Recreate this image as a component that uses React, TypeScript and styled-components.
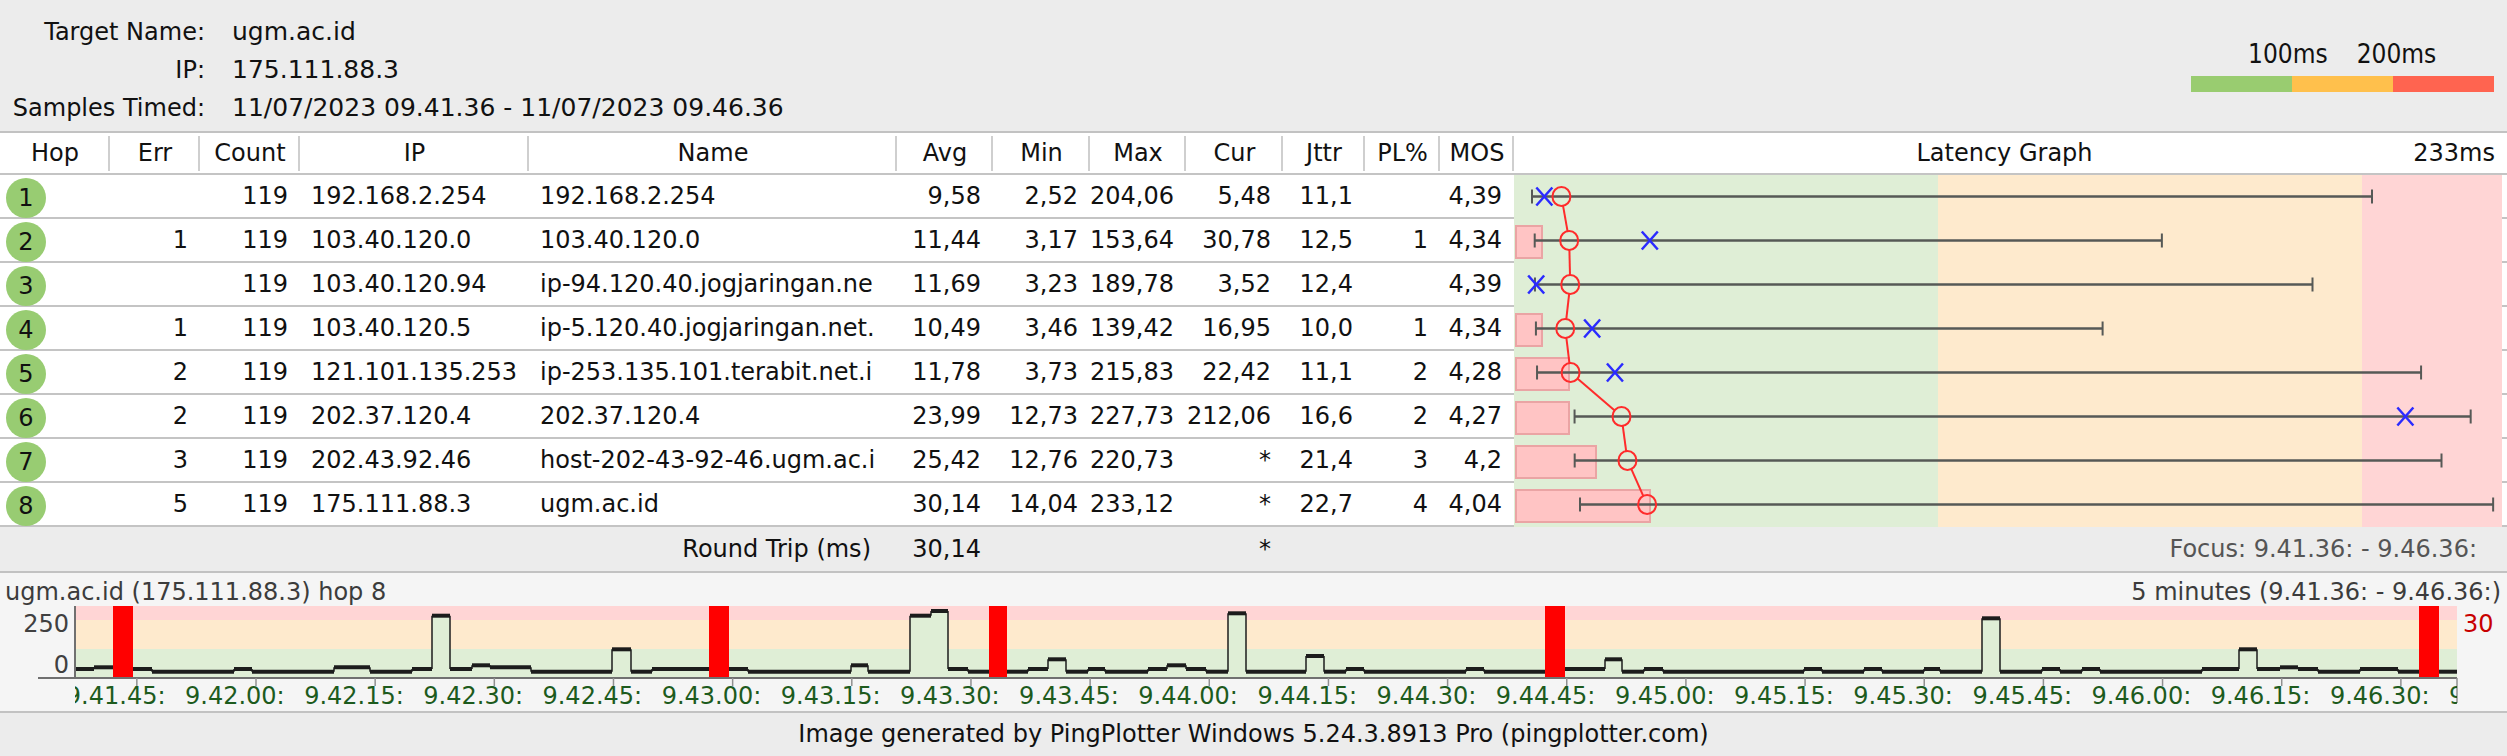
import React from "react";
import styled, { createGlobalStyle } from "styled-components";

const GlobalStyle = createGlobalStyle`
  html, body {
    margin: 0;
    padding: 0;
  }
  body {
    background: #ececec;
    font-family: "DejaVu Sans", Verdana, sans-serif;
    font-size: 24px;
    color: #111;
  }
`;

const COLUMNS =
  "110px 90px 100px 229px 368px 96px 97px 96px 97px 82px 75px 74px 993px";

const BAND = {
  green: "#dfeed6",
  orange: "#feeacd",
  pink: "#ffd5d5",
};

const hops = [
  { hop: 1, err: "", count: "119", ip: "192.168.2.254", name: "192.168.2.254", avg: "9,58", min: "2,52", max: "204,06", cur: "5,48", jttr: "11,1", pl: "", mos: "4,39" },
  { hop: 2, err: "1", count: "119", ip: "103.40.120.0", name: "103.40.120.0", avg: "11,44", min: "3,17", max: "153,64", cur: "30,78", jttr: "12,5", pl: "1", mos: "4,34" },
  { hop: 3, err: "", count: "119", ip: "103.40.120.94", name: "ip-94.120.40.jogjaringan.ne", avg: "11,69", min: "3,23", max: "189,78", cur: "3,52", jttr: "12,4", pl: "", mos: "4,39" },
  { hop: 4, err: "1", count: "119", ip: "103.40.120.5", name: "ip-5.120.40.jogjaringan.net.", avg: "10,49", min: "3,46", max: "139,42", cur: "16,95", jttr: "10,0", pl: "1", mos: "4,34" },
  { hop: 5, err: "2", count: "119", ip: "121.101.135.253", name: "ip-253.135.101.terabit.net.i", avg: "11,78", min: "3,73", max: "215,83", cur: "22,42", jttr: "11,1", pl: "2", mos: "4,28" },
  { hop: 6, err: "2", count: "119", ip: "202.37.120.4", name: "202.37.120.4", avg: "23,99", min: "12,73", max: "227,73", cur: "212,06", jttr: "16,6", pl: "2", mos: "4,27" },
  { hop: 7, err: "3", count: "119", ip: "202.43.92.46", name: "host-202-43-92-46.ugm.ac.i", avg: "25,42", min: "12,76", max: "220,73", cur: "*", jttr: "21,4", pl: "3", mos: "4,2" },
  { hop: 8, err: "5", count: "119", ip: "175.111.88.3", name: "ugm.ac.id", avg: "30,14", min: "14,04", max: "233,12", cur: "*", jttr: "22,7", pl: "4", mos: "4,04" },
];

const headers = ["Hop", "Err", "Count", "IP", "Name", "Avg", "Min", "Max", "Cur", "Jttr", "PL%", "MOS"];

const Page = styled.div`
  width: 2507px;
  height: 756px;
  display: flex;
  flex-direction: column;
  overflow: hidden;
`;

const InfoBar = styled.header`
  height: 133px;
  box-sizing: border-box;
  border-bottom: 2px solid #c2c2c2;
  display: flex;
  justify-content: space-between;
  align-items: flex-start;
`;

const InfoGrid = styled.div`
  display: grid;
  grid-template-columns: 205px auto;
  column-gap: 27px;
  padding-top: 13px;
  line-height: 37px;
  white-space: nowrap;
  align-items: baseline;
`;

const InfoLabel = styled.span`
  text-align: right;
`;

const InfoValue = styled.span`
  font-size: 25px;
`;

const Legend = styled.div`
  padding: 39px 13px 0 0;
  display: flex;
  flex-direction: column;
  font-family: "DejaVu Sans Condensed", "DejaVu Sans", sans-serif;
  font-size: 26px;
  color: #111;
`;

const LegendLabels = styled.div`
  display: flex;
  gap: 29px;
  padding-left: 57px;
  line-height: 30px;
`;

const LegendBar = styled.div`
  display: flex;
  margin-top: 7px;
`;

const LegendSwatch = styled.div<{ $color: string }>`
  width: 101px;
  height: 16px;
  background: ${(p) => p.$color};
`;

const Table = styled.div`
  display: grid;
  grid-template-columns: ${COLUMNS};
  grid-template-rows: 42px repeat(8, 44px);
  background: #fff;
`;

const HeadCell = styled.div<{ $sep?: boolean }>`
  height: 42px;
  box-sizing: border-box;
  border-bottom: 2px solid #c4c4c4;
  display: flex;
  align-items: center;
  justify-content: center;
  white-space: nowrap;
  background: ${(p) =>
    p.$sep ? "linear-gradient(#cfcfcf, #cfcfcf) no-repeat right 0 top 3px / 2px 35px" : "none"};
`;

const GraphHead = styled(HeadCell)`
  display: grid;
  grid-template-columns: 1fr auto 1fr;
  padding-right: 12px;
`;

const GraphMax = styled.span`
  justify-self: end;
`;

const Cell = styled.div<{ $align?: "left" | "right" }>`
  height: 44px;
  box-sizing: border-box;
  border-bottom: 2px solid #c4c4c4;
  display: flex;
  align-items: center;
  justify-content: ${(p) => (p.$align === "left" ? "flex-start" : "flex-end")};
  padding: ${(p) => (p.$align === "left" ? "0 0 0 11px" : "0 12px 0 0")};
  white-space: nowrap;
  overflow: hidden;
`;

const HopCell = styled.div`
  height: 44px;
  box-sizing: border-box;
  border-bottom: 2px solid #c4c4c4;
  display: flex;
  align-items: flex-start;
  padding-left: 6px;
`;

const HopBadge = styled.div`
  width: 40px;
  height: 40px;
  margin-top: 3px;
  border-radius: 50%;
  background: #98cc72;
  display: flex;
  align-items: center;
  justify-content: center;
  position: relative;
`;

const GraphCell = styled.div`
  grid-column: 13;
  grid-row: 2 / span 8;
`;

const GraphSvg = styled.svg`
  display: block;
`;

const SummaryRow = styled.div`
  display: grid;
  grid-template-columns: ${COLUMNS};
  height: 46px;
  box-sizing: border-box;
  border-bottom: 2px solid #c2c2c2;
  align-items: center;
  white-space: nowrap;
`;

const SummaryCell = styled.span<{ $col: string; $pad?: number; $muted?: boolean }>`
  grid-column: ${(p) => p.$col};
  justify-self: end;
  padding-right: ${(p) => p.$pad ?? 12}px;
  color: ${(p) => (p.$muted ? "#555" : "#111")};
`;

const TrendPanel = styled.section`
  height: 140px;
  box-sizing: border-box;
  border-bottom: 2px solid #c2c2c2;
  background: #f5f5f5;
  display: flex;
  flex-direction: column;
`;

const TrendHeader = styled.div`
  height: 33px;
  box-sizing: border-box;
  padding: 5px 6px 0 5px;
  display: flex;
  justify-content: space-between;
  line-height: 28px;
  color: #3c3c3c;
  white-space: nowrap;
`;

const TrendSvg = styled.svg`
  display: block;
  font-family: "DejaVu Sans", Verdana, sans-serif;
  font-size: 24px;
`;

const Footer = styled.footer`
  height: 43px;
  line-height: 43px;
  text-align: center;
  color: #111;
  white-space: nowrap;
`;

const num = (v: string) => parseFloat(v.replace(",", "."));
const msToX = (ms: number) => 7.5 + 4.168 * ms;
const ROW_H = 44;

function LatencyGraph() {
  const centers = hops.map((h, i) => ({ x: msToX(num(h.avg)), y: i * ROW_H + 21.5 }));
  const r = 9;
  return (
    <GraphSvg width={993} height={ROW_H * 8}>
      <rect x={0} y={0} width={424} height={352} fill={BAND.green} />
      <rect x={424} y={0} width={424} height={352} fill={BAND.orange} />
      <rect x={848} y={0} width={140} height={352} fill={BAND.pink} />
      <rect x={988} y={0} width={5} height={352} fill="#fff" />
      {hops.map((_, i) => (
        <rect key={`sep${i}`} x={988} y={i * ROW_H + 42} width={5} height={2} fill="#c4c4c4" />
      ))}
      {hops.map((h, i) => {
        const cy = i * ROW_H + 21.5;
        const x1 = msToX(num(h.min));
        const x2 = msToX(num(h.max));
        const err = h.err ? parseInt(h.err, 10) : 0;
        return (
          <g key={h.hop}>
            {err > 0 && (
              <rect
                x={2}
                y={i * ROW_H + 7}
                width={27 * err - 1}
                height={32}
                fill="#ffc4c4"
                stroke="#eaa4a4"
                strokeWidth={2}
              />
            )}
            <line x1={x1} x2={x2} y1={cy} y2={cy} stroke="#565956" strokeWidth={2.5} />
            <line x1={x1} x2={x1} y1={cy - 7} y2={cy + 7} stroke="#565956" strokeWidth={2} />
            <line x1={x2} x2={x2} y1={cy - 7} y2={cy + 7} stroke="#565956" strokeWidth={2} />
          </g>
        );
      })}
      {centers.slice(0, -1).map((a, i) => {
        const b = centers[i + 1];
        const dx = b.x - a.x;
        const dy = b.y - a.y;
        const len = Math.hypot(dx, dy);
        return (
          <line
            key={`link${i}`}
            x1={a.x + (dx / len) * r}
            y1={a.y + (dy / len) * r}
            x2={b.x - (dx / len) * r}
            y2={b.y - (dy / len) * r}
            stroke="#ff2b2b"
            strokeWidth={2}
          />
        );
      })}
      {hops.map((h, i) => {
        if (h.cur === "*") return null;
        const x = msToX(num(h.cur));
        const y = i * ROW_H + 21.5;
        return (
          <path
            key={`cur${i}`}
            d={`M${x - 8} ${y - 9} L${x + 8} ${y + 9} M${x + 8} ${y - 9} L${x - 8} ${y + 9}`}
            stroke="#2b2bff"
            strokeWidth={2.5}
            fill="none"
          />
        );
      })}
      {centers.map((c, i) => (
        <ellipse key={`avg${i}`} cx={c.x} cy={c.y} rx={9} ry={9.5} fill="none" stroke="#ff2b2b" strokeWidth={2} />
      ))}
    </GraphSvg>
  );
}

// step data of the hop 8 trace, in page x and chart-relative y
const B = 65.7;
const b = 63;
const c = 61.3;
const d = 59.3;
const runs: [number, number, number][][] = [
  [[75, 94, b], [94, 113, c]],
  [
    [133, 152, b], [152, 234, B], [234, 252, b], [252, 334, B], [334, 370, c], [370, 412, B],
    [412, 432, b], [432, 450, 9.7], [450, 472, b], [472, 490, d], [490, 531, c], [531, 612, B],
    [612, 631, 43.3], [631, 652, B], [652, 709, b],
  ],
  [
    [729, 748, b], [748, 851, B], [851, 868, d], [868, 910, B], [910, 931, 9.7], [931, 948, 5],
    [948, 968, b], [968, 989, B],
  ],
  [
    [1007, 1028, B], [1028, 1048, b], [1048, 1066, 53.3], [1066, 1088, B], [1088, 1105, b],
    [1105, 1148, B], [1148, 1167, b], [1167, 1186, d], [1186, 1206, b], [1206, 1228, B],
    [1228, 1246, 7.3], [1246, 1306, B], [1306, 1324, 50], [1324, 1346, B], [1346, 1364, b],
    [1364, 1466, B], [1466, 1484, b], [1484, 1545, B],
  ],
  [
    [1565, 1605, b], [1605, 1622, 53.3], [1622, 1644, B], [1644, 1663, b], [1663, 1804, B],
    [1804, 1822, b], [1822, 1864, B], [1864, 1882, b], [1882, 1924, B], [1924, 1940, b],
    [1940, 1982, B], [1982, 2000, 12.3], [2000, 2042, B], [2042, 2060, b], [2060, 2082, B],
    [2082, 2100, b], [2100, 2202, B], [2202, 2239, b], [2239, 2257, 43.3], [2257, 2280, b],
    [2280, 2298, c], [2298, 2318, b], [2318, 2360, B], [2360, 2398, b], [2398, 2419, B],
  ],
  [[2439, 2457, B]],
];

const lossBars = [
  [113, 20],
  [709, 20],
  [989, 18],
  [1545, 20],
  [2419, 20],
];

const PLOT_L = 75;
const PLOT_R = 2457;
const AXIS_Y = 72;

const tickX = (t: number) => 256 + (t - 24) * 7.944;
const timeLabel = (t: number) => {
  const total = 41 * 60 + 36 + t;
  const mm = Math.floor(total / 60);
  const ss = total % 60;
  return `9.${String(mm).padStart(2, "0")}.${String(ss).padStart(2, "0")}:`;
};

function TrendChart() {
  const ticks: number[] = [];
  for (let t = 9; t <= 309; t += 15) ticks.push(t);
  return (
    <TrendSvg width={2507} height={105}>
      <defs>
        <clipPath id="plotClip">
          <rect x={PLOT_L} y={0} width={PLOT_R - PLOT_L} height={105} />
        </clipPath>
      </defs>
      <rect x={PLOT_L} y={0} width={PLOT_R - PLOT_L} height={14} fill={BAND.pink} />
      <rect x={PLOT_L} y={14} width={PLOT_R - PLOT_L} height={29} fill={BAND.orange} />
      <rect x={PLOT_L} y={43} width={PLOT_R - PLOT_L} height={29} fill={BAND.green} />
      {runs.map((run, ri) => {
        const pts = [`${run[0][0]},${AXIS_Y}`];
        run.forEach(([x1, x2, y]) => pts.push(`${x1},${y}`, `${x2},${y}`));
        pts.push(`${run[run.length - 1][1]},${AXIS_Y}`);
        return (
          <g key={`run${ri}`}>
            <polygon points={pts.join(" ")} fill={BAND.green} />
            {run.slice(0, -1).map(([, x2, y], si) => (
              <line key={`v${si}`} x1={x2} x2={x2} y1={y} y2={run[si + 1][2]} stroke="#1c1c1c" strokeWidth={1.5} />
            ))}
            {run.map(([x1, x2, y], si) => (
              <line key={`h${si}`} x1={x1} x2={x2} y1={y} y2={y} stroke="#1c1c1c" strokeWidth={4} />
            ))}
          </g>
        );
      })}
      {lossBars.map(([x, w]) => (
        <rect key={`loss${x}`} x={x} y={0} width={w} height={AXIS_Y} fill="#ff0000" />
      ))}
      <line x1={PLOT_L} x2={PLOT_L} y1={0} y2={AXIS_Y} stroke="#707070" strokeWidth={2} />
      <line x1={38} x2={PLOT_R} y1={AXIS_Y} y2={AXIS_Y} stroke="#707070" strokeWidth={2} />
      <line x1={PLOT_R} x2={PLOT_R} y1={AXIS_Y} y2={97} stroke="#909090" strokeWidth={1.5} />
      {ticks
        .filter((t) => tickX(t) > PLOT_L && tickX(t) < PLOT_R)
        .map((t) => (
          <line key={`tick${t}`} x1={tickX(t)} x2={tickX(t)} y1={AXIS_Y} y2={80} stroke="#909090" strokeWidth={1.5} />
        ))}
      <g clipPath="url(#plotClip)">
        {ticks.map((t) => (
          <text key={`lbl${t}`} x={tickX(t) - 71} y={98} fill="#1d5b1d">
            {timeLabel(t)}
          </text>
        ))}
      </g>
      <text x={69} y={26} textAnchor="end" fill="#404040">
        250
      </text>
      <text x={69} y={67} textAnchor="end" fill="#404040">
        0
      </text>
      <text x={2463} y={26} fill="#c80000">
        30
      </text>
    </TrendSvg>
  );
}

export default function App() {
  return (
    <Page>
      <GlobalStyle />
      <InfoBar>
        <InfoGrid>
          <InfoLabel>Target Name:</InfoLabel>
          <InfoValue>ugm.ac.id</InfoValue>
          <InfoLabel>IP:</InfoLabel>
          <InfoValue>175.111.88.3</InfoValue>
          <InfoLabel>Samples Timed:</InfoLabel>
          <InfoValue>11/07/2023 09.41.36 - 11/07/2023 09.46.36</InfoValue>
        </InfoGrid>
        <Legend>
          <LegendLabels>
            <span>100ms</span>
            <span>200ms</span>
          </LegendLabels>
          <LegendBar>
            <LegendSwatch $color="#99cc70" />
            <LegendSwatch $color="#ffc04c" />
            <LegendSwatch $color="#ff6450" />
          </LegendBar>
        </Legend>
      </InfoBar>

      <Table>
        {headers.map((h) => (
          <HeadCell key={h} $sep>
            {h}
          </HeadCell>
        ))}
        <GraphHead>
          <span />
          <span>Latency Graph</span>
          <GraphMax>233ms</GraphMax>
        </GraphHead>
        <GraphCell>
          <LatencyGraph />
        </GraphCell>
        {hops.map((h) => (
          <React.Fragment key={h.hop}>
            <HopCell>
              <HopBadge>{h.hop}</HopBadge>
            </HopCell>
            <Cell>{h.err}</Cell>
            <Cell>{h.count}</Cell>
            <Cell $align="left">{h.ip}</Cell>
            <Cell $align="left">{h.name}</Cell>
            <Cell>{h.avg}</Cell>
            <Cell>{h.min}</Cell>
            <Cell>{h.max}</Cell>
            <Cell>{h.cur}</Cell>
            <Cell>{h.jttr}</Cell>
            <Cell>{h.pl}</Cell>
            <Cell>{h.mos}</Cell>
          </React.Fragment>
        ))}
      </Table>

      <SummaryRow>
        <SummaryCell $col="1 / span 5" $pad={26}>
          Round Trip (ms)
        </SummaryCell>
        <SummaryCell $col="6">30,14</SummaryCell>
        <SummaryCell $col="9">*</SummaryCell>
        <SummaryCell $col="13" $pad={30} $muted>
          Focus: 9.41.36: - 9.46.36:
        </SummaryCell>
      </SummaryRow>

      <TrendPanel>
        <TrendHeader>
          <span>ugm.ac.id (175.111.88.3) hop 8</span>
          <span>5 minutes (9.41.36: - 9.46.36:)</span>
        </TrendHeader>
        <TrendChart />
      </TrendPanel>

      <Footer>Image generated by PingPlotter Windows 5.24.3.8913 Pro (pingplotter.com)</Footer>
    </Page>
  );
}
